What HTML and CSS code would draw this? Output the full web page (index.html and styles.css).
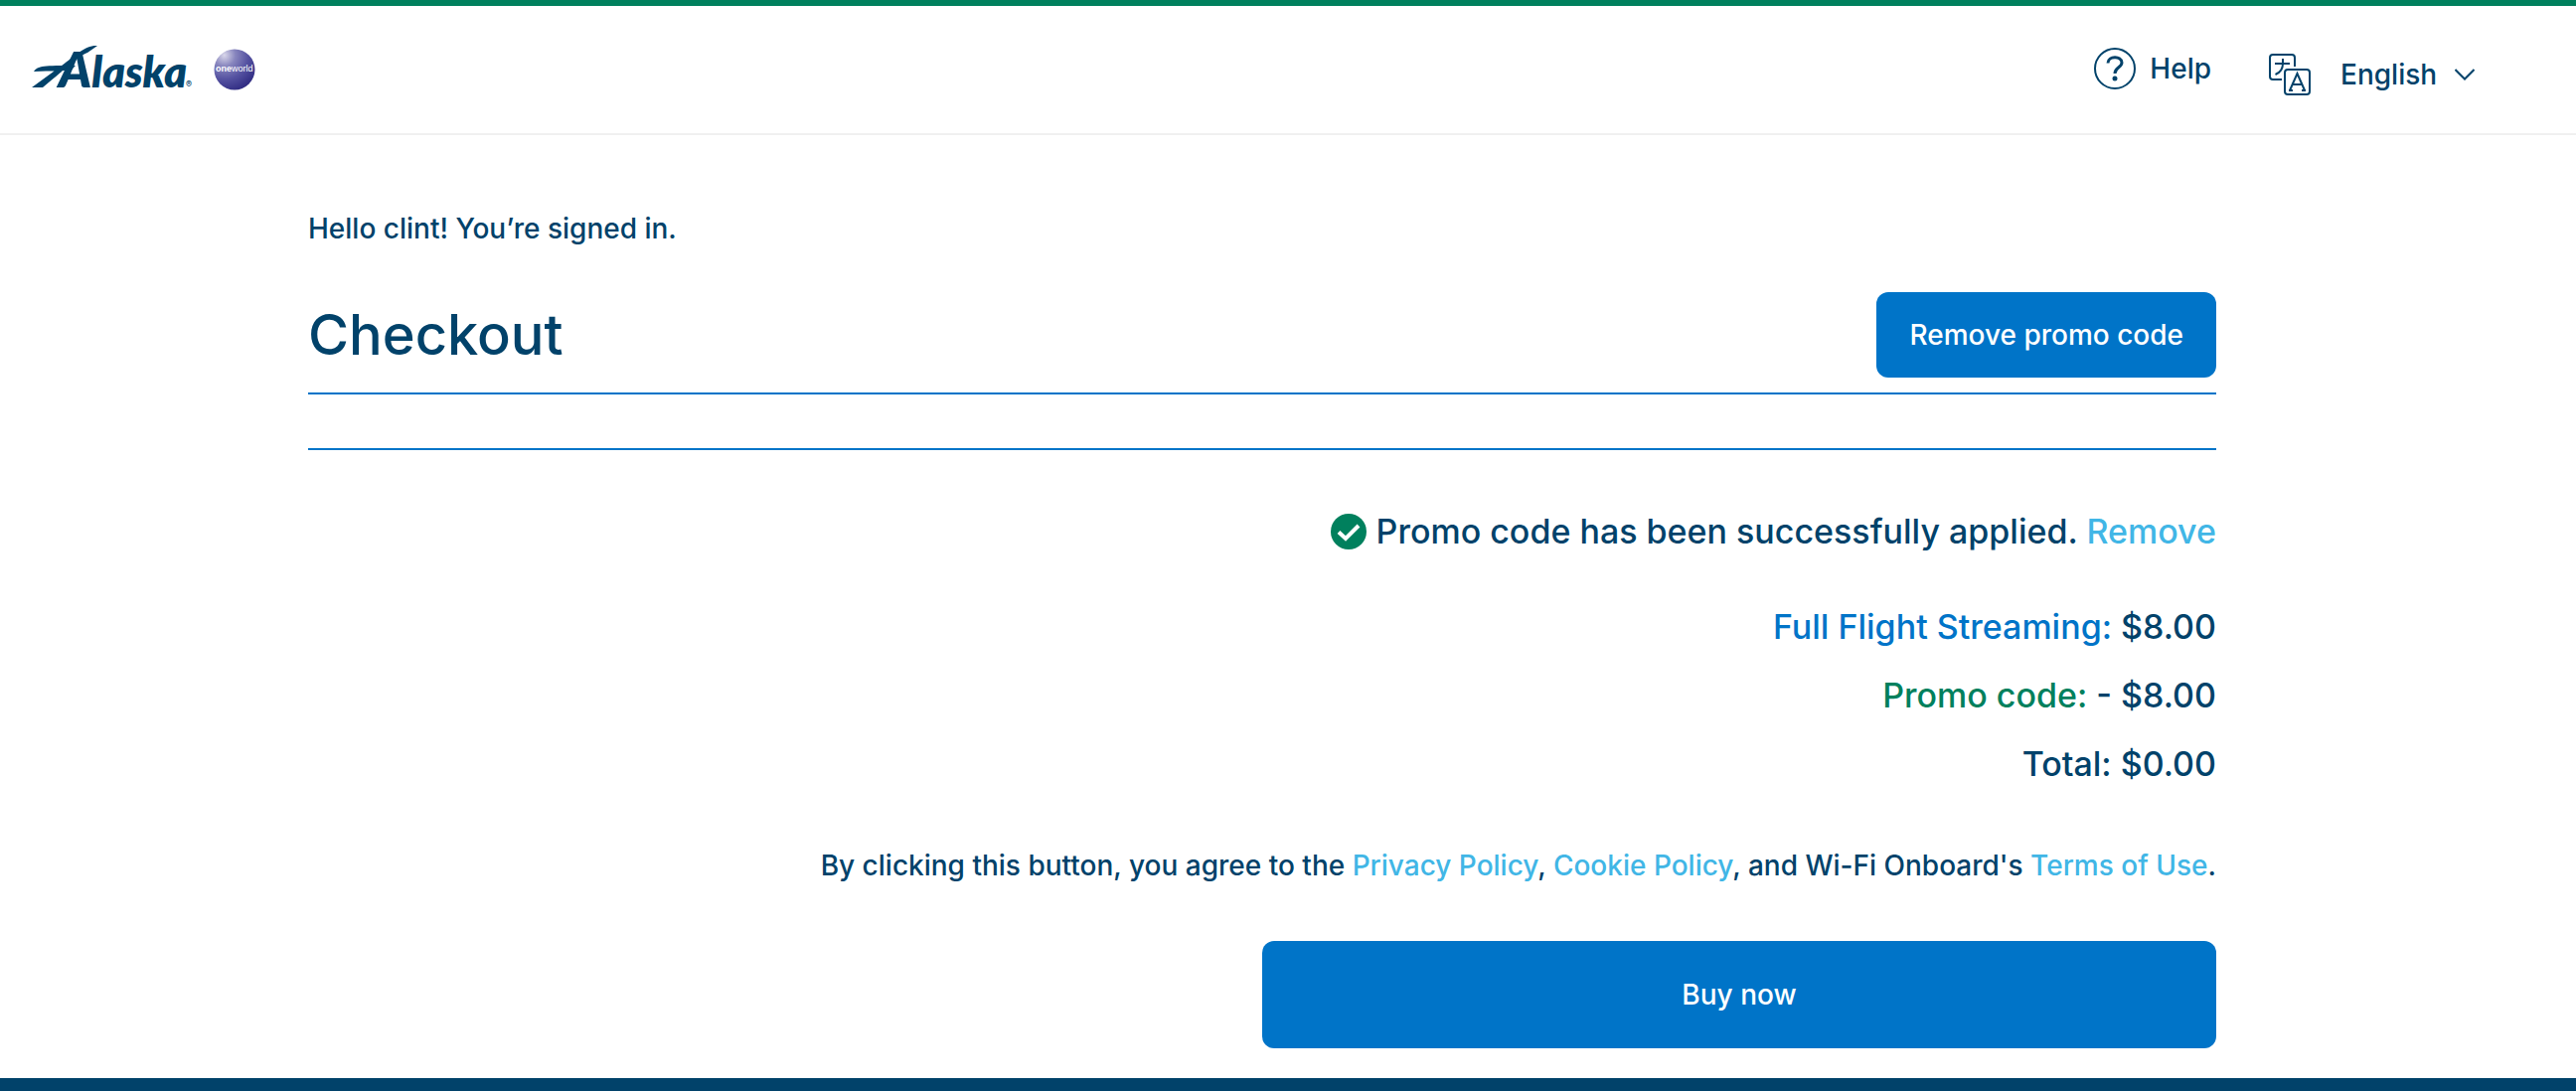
FILE: index.html
```html
<!DOCTYPE html>
<html lang="en">
<head>
  <meta charset="UTF-8">
  <meta name="viewport" content="width=device-width, initial-scale=1.0">
  <title>Checkout</title>
  <link rel="stylesheet" href="styles.css">
</head>
<body>
  <header class="header">
    <a class="brand" href="#" aria-label="Alaska Airlines home">
      <svg class="wordmark" viewBox="0 0 164 52">
        <path d="M2 28 C6 22 12 22 44 22 L40 26 C30 28 20 27 2 28 Z M0 44 L26 25 C44 12 54 1 66 2 L56 9 C46 13 38 22 11 44 Z"/>
        <text class="wordmark-text" x="27" y="44"><tspan class="initial">A</tspan>laska</text>
        <text class="wordmark-reg" x="155" y="44">®</text>
      </svg>
      <svg class="oneworld" viewBox="0 0 42 42">
        <defs>
          <radialGradient id="globe" cx="0.25" cy="0.15" r="0.9">
            <stop offset="0" stop-color="#d9d7ea"/>
            <stop offset="0.3" stop-color="#8886be"/>
            <stop offset="0.65" stop-color="#5552a1"/>
            <stop offset="1" stop-color="#322e84"/>
          </radialGradient>
        </defs>
        <circle cx="21" cy="21" r="20.5" fill="url(#globe)"/>
        <text class="oneworld-text" x="2" y="23"><tspan class="one">one</tspan>world</text>
      </svg>
    </a>
    <nav class="tools">
      <a class="help" href="#">
        <svg class="help-icon" viewBox="0 0 42 42">
          <circle cx="21" cy="21" r="20"/>
          <path d="M14 15.5 C14 8 28 8 28 15 C28 20 21 19.5 21 26"/>
          <circle class="dot" cx="21" cy="31" r="2.5"/>
        </svg>
        Help
      </a>
      <div class="language">
        <svg class="language-icon" viewBox="0 0 42 42">
          <path d="M13 26 H4 Q1 26 1 23 V4 Q1 1 4 1 H23 Q26 1 26 4 V13"/>
          <rect x="16" y="16" width="25" height="25" rx="3"/>
          <path d="M6 10 H21 M14 5 V10 Q14 18 6.5 21"/>
          <path d="M21 37 L28.5 20 L36 37 M23.5 31 H33.5 M20 37 H24 M33 37 H37"/>
        </svg>
        <select class="language-select" aria-label="Language">
          <option>English</option>
          <option>Español</option>
        </select>
        <svg class="chevron" viewBox="0 0 20 12">
          <path d="M0.5 1 L10 10.5 L19.5 1"/>
        </svg>
      </div>
    </nav>
  </header>

  <main class="checkout">
    <p class="greeting">Hello clint! You’re signed in.</p>
    <div class="title-row">
      <h1>Checkout</h1>
      <button class="btn" type="button">Remove promo code</button>
    </div>
    <div class="divider"></div>

    <p class="notice">
      <svg class="check" viewBox="0 0 36 36">
        <circle cx="18" cy="18" r="18"/>
        <path d="M8 18.5 L15 25 L28 12"/>
      </svg>
      <span>Promo code has been successfully applied. <a href="#">Remove</a></span>
    </p>

    <div class="summary">
      <p><span class="item">Full Flight Streaming:</span> $8.00</p>
      <p><span class="promo">Promo code:</span> - $8.00</p>
      <p>Total: $0.00</p>
    </div>

    <p class="terms">By clicking this button, you agree to the <a href="#">Privacy Policy</a>, <a href="#">Cookie Policy</a>, and Wi-Fi Onboard's <a href="#">Terms of Use</a>.</p>
    <button class="btn buy" type="button">Buy now</button>
  </main>

  <footer class="footer"></footer>
</body>
</html>
```
FILE: styles.css
```css
* {
  box-sizing: border-box;
}

body {
  margin: 0;
  min-height: 100vh;
  display: flex;
  flex-direction: column;
  border-top: 6px solid #00805d;
  background: #fff;
  color: #01426a;
  font-family: Inter, sans-serif;
  font-size: 28px;
  font-weight: 500;
  line-height: 40px;
}

h1,
p {
  margin: 0;
}

a {
  color: #41b6e6;
  text-decoration: none;
}

.header {
  display: flex;
  align-items: center;
  justify-content: space-between;
  height: 130px;
  padding: 0 102px 0 32px;
  border-bottom: 2px solid #f0f0f0;
}

.brand {
  display: flex;
  align-items: center;
  gap: 19px;
}

.wordmark {
  width: 164px;
  height: 52px;
  fill: #01426a;
}

.wordmark-text {
  font-family: Lato, sans-serif;
  font-size: 43px;
  font-weight: 800;
  font-style: italic;
}

.initial {
  font-size: 50px;
}

.wordmark-reg {
  font-size: 9px;
}

.oneworld {
  width: 42px;
  height: 42px;
}

.oneworld-text {
  fill: #fff;
  font-family: "Liberation Sans", sans-serif;
  font-size: 9px;
}

.one {
  font-weight: 700;
}

.tools {
  display: flex;
  align-items: center;
  gap: 58px;
}

.help {
  display: flex;
  align-items: center;
  gap: 14px;
  padding-bottom: 2px;
  color: #01426a;
}

.help-icon,
.language-icon {
  width: 42px;
  height: 42px;
  fill: none;
  stroke: #01426a;
  stroke-width: 2;
}

.help-icon path {
  stroke-width: 3;
}

.help-icon .dot {
  fill: #01426a;
  stroke: none;
}

.language {
  display: flex;
  align-items: center;
  padding-top: 10px;
}

.language-select {
  appearance: none;
  margin: 0 8px 0 30px;
  padding: 0;
  border: 0;
  background: none;
  color: inherit;
  font: inherit;
}

.chevron {
  width: 20px;
  height: 12px;
  fill: none;
  stroke: #01426a;
  stroke-width: 2;
}

.checkout {
  flex: 1;
  display: flex;
  flex-direction: column;
  padding: 74px 362px 30px 310px;
}

.title-row {
  display: flex;
  align-items: center;
  justify-content: space-between;
  margin-top: 44px;
}

h1 {
  font-size: 56px;
  font-weight: 500;
  line-height: 72px;
}

.btn {
  height: 86px;
  padding: 0 33px;
  border: 0;
  border-radius: 12px;
  background: #0074c8;
  color: #fff;
  font: inherit;
}

.divider {
  height: 58px;
  margin-top: 15px;
  border-top: 2px solid #0074c8;
  border-bottom: 2px solid #0074c8;
}

.notice {
  display: flex;
  align-items: center;
  justify-content: flex-end;
  gap: 10px;
  margin-top: 62px;
  font-size: 34px;
  line-height: 40px;
}

.check {
  width: 36px;
  height: 36px;
  fill: #00805d;
}

.check path {
  fill: none;
  stroke: #fff;
  stroke-width: 4;
}

.summary {
  margin-top: 41px;
  font-size: 34px;
  line-height: 69px;
  text-align: right;
}

.item {
  color: #0074c8;
}

.promo {
  color: #00805d;
}

.terms {
  margin-top: 48px;
  text-align: right;
}

.buy {
  align-self: flex-end;
  width: 50%;
  height: 108px;
  margin-top: 56px;
}

.footer {
  height: 13px;
  background: #01426a;
}
```
